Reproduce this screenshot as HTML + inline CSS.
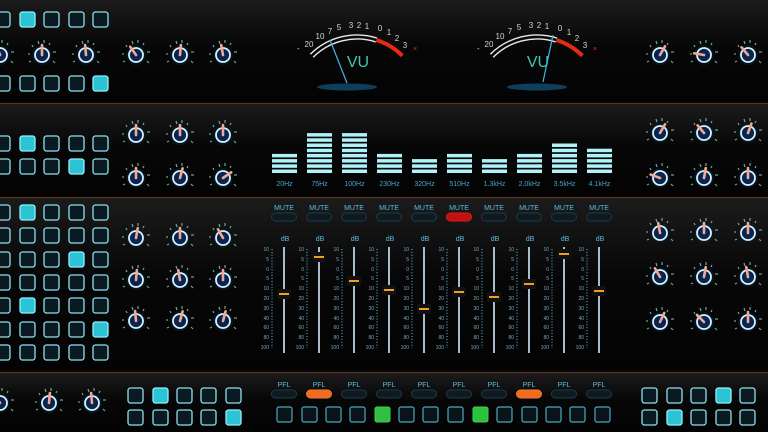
<!DOCTYPE html>
<html><head><meta charset="utf-8"><style>
html,body{margin:0;padding:0;background:#000;width:768px;height:432px;overflow:hidden}
svg{display:block}
text{font-family:"Liberation Sans",sans-serif}
.b{width:15px;height:15px;rx:2.5px;fill:#0a1a20;stroke:#8fe0ee;stroke-width:1.3}
.a{width:15px;height:15px;rx:2.5px;fill:#2cc4d4;stroke:#8ff0ff;stroke-width:1.3}
.sq{width:15px;height:15px;rx:2px;fill:#0a1418;stroke:#4aa8c0;stroke-width:1.2}
.g{width:15px;height:15px;rx:2px;fill:#30c040;stroke:#40d050;stroke-width:1}
.st{fill:#b0f2fa}
.hz{font-size:7px;fill:#4aa4c8;text-anchor:middle}
.lb{font-size:7px;fill:#5cbce0;text-anchor:middle}
.sc{font-size:5px;fill:#7aa8c0;text-anchor:end}
.pl{width:25px;height:8px;rx:4px;fill:#0d1a22;stroke:#1e3a48;stroke-width:1}
.vt{font-size:8px;fill:#c8d8d8;text-anchor:middle}
</style></head><body>
<svg width="768" height="432" viewBox="0 0 768 432" xmlns="http://www.w3.org/2000/svg">
<defs>
<linearGradient id="pg" x1="0" y1="0" x2="0" y2="1"><stop offset="0" stop-color="#1b1b1c"/><stop offset=".45" stop-color="#070707"/><stop offset="1" stop-color="#030303"/></linearGradient>
<g id="k">
<circle r="10" fill="#0a1a26" opacity=".7"/>
<circle r="7" fill="#0a2450" stroke="#d6f2ff" stroke-width="1.8"/>
<g stroke="#6aa898" stroke-width="1.2">
<line x1="-11" y1="6" x2="-13" y2="7"/><line x1="-12" y1="-1" x2="-14" y2="-1"/><line x1="-9" y1="-8" x2="-10" y2="-10"/><line x1="-3" y1="-11" x2="-4" y2="-14"/><line x1="2" y1="-12" x2="2" y2="-15"/><line x1="7" y1="-10" x2="8" y2="-12"/><line x1="11" y1="-3" x2="14" y2="-3"/><line x1="11" y1="6" x2="13" y2="8"/>
</g>
</g>
<line id="p" x1="0" y1="0" x2="0" y2="-10" stroke="#f4a890" stroke-width="2.6" stroke-linecap="round"/>
</defs>

<rect x="0" y="0" width="768" height="103" fill="url(#pg)"/>
<rect x="0" y="104" width="768" height="93" fill="url(#pg)"/>
<rect x="0" y="198" width="768" height="174" fill="url(#pg)"/>
<rect x="0" y="373" width="768" height="59" fill="url(#pg)"/>
<g stroke="#5a3220" stroke-width="1.2"><line x1="0" y1="103.5" x2="768" y2="103.5"/><line x1="0" y1="197.5" x2="768" y2="197.5"/><line x1="0" y1="372.5" x2="768" y2="372.5"/></g>

<g>
<rect class="b" x="-5" y="12"/><rect class="a" x="20" y="12"/><rect class="b" x="44" y="12"/><rect class="b" x="69" y="12"/><rect class="b" x="93" y="12"/>
<rect class="b" x="-5" y="76"/><rect class="b" x="20" y="76"/><rect class="b" x="44" y="76"/><rect class="b" x="69" y="76"/><rect class="a" x="93" y="76"/>
<rect class="b" x="-5" y="136"/><rect class="a" x="20" y="136"/><rect class="b" x="44" y="136"/><rect class="b" x="69" y="136"/><rect class="b" x="93" y="136"/>
<rect class="b" x="-5" y="159"/><rect class="b" x="20" y="159"/><rect class="b" x="44" y="159"/><rect class="a" x="69" y="159"/><rect class="b" x="93" y="159"/>
<rect class="b" x="-5" y="205"/><rect class="a" x="20" y="205"/><rect class="b" x="44" y="205"/><rect class="b" x="69" y="205"/><rect class="b" x="93" y="205"/>
<rect class="b" x="-5" y="228"/><rect class="b" x="20" y="228"/><rect class="b" x="44" y="228"/><rect class="b" x="69" y="228"/><rect class="b" x="93" y="228"/>
<rect class="b" x="-5" y="252"/><rect class="b" x="20" y="252"/><rect class="b" x="44" y="252"/><rect class="a" x="69" y="252"/><rect class="b" x="93" y="252"/>
<rect class="b" x="-5" y="275"/><rect class="b" x="20" y="275"/><rect class="b" x="44" y="275"/><rect class="b" x="69" y="275"/><rect class="b" x="93" y="275"/>
<rect class="b" x="-5" y="298"/><rect class="a" x="20" y="298"/><rect class="b" x="44" y="298"/><rect class="b" x="69" y="298"/><rect class="b" x="93" y="298"/>
<rect class="b" x="-5" y="322"/><rect class="b" x="20" y="322"/><rect class="b" x="44" y="322"/><rect class="b" x="69" y="322"/><rect class="a" x="93" y="322"/>
<rect class="b" x="-5" y="345"/><rect class="b" x="20" y="345"/><rect class="b" x="44" y="345"/><rect class="b" x="69" y="345"/><rect class="b" x="93" y="345"/>
<rect class="b" x="128" y="388"/><rect class="a" x="153" y="388"/><rect class="b" x="177" y="388"/><rect class="b" x="201" y="388"/><rect class="b" x="226" y="388"/>
<rect class="b" x="128" y="410"/><rect class="b" x="153" y="410"/><rect class="b" x="177" y="410"/><rect class="b" x="201" y="410"/><rect class="a" x="226" y="410"/>
<rect class="b" x="642" y="388"/><rect class="b" x="667" y="388"/><rect class="b" x="691" y="388"/><rect class="a" x="716" y="388"/><rect class="b" x="740" y="388"/>
<rect class="b" x="642" y="410"/><rect class="a" x="667" y="410"/><rect class="b" x="691" y="410"/><rect class="b" x="716" y="410"/><rect class="b" x="740" y="410"/>
</g>

<g>
<g transform="translate(0,55)"><use href="#k"/><use href="#p" transform="rotate(-20)"/></g>
<g transform="translate(42,55)"><use href="#k"/><use href="#p" transform="rotate(0)"/></g>
<g transform="translate(86,55)"><use href="#k"/><use href="#p" transform="rotate(-5)"/></g>
<g transform="translate(136,55)"><use href="#k"/><use href="#p" transform="rotate(-35)"/></g>
<g transform="translate(180,55)"><use href="#k"/><use href="#p" transform="rotate(5)"/></g>
<g transform="translate(223,55)"><use href="#k"/><use href="#p" transform="rotate(-10)"/></g>
<g transform="translate(660,55)"><use href="#k"/><use href="#p" transform="rotate(30)"/></g>
<g transform="translate(704,55)"><use href="#k"/><use href="#p" transform="rotate(-80)"/></g>
<g transform="translate(748,55)"><use href="#k"/><use href="#p" transform="rotate(-40)"/></g>
<g transform="translate(136,135)"><use href="#k"/><use href="#p" transform="rotate(0)"/></g>
<g transform="translate(180,135)"><use href="#k"/><use href="#p" transform="rotate(0)"/></g>
<g transform="translate(223,135)"><use href="#k"/><use href="#p" transform="rotate(0)"/></g>
<g transform="translate(136,178)"><use href="#k"/><use href="#p" transform="rotate(0)"/></g>
<g transform="translate(180,178)"><use href="#k"/><use href="#p" transform="rotate(15)"/></g>
<g transform="translate(223,178)"><use href="#k"/><use href="#p" transform="rotate(55)"/></g>
<g transform="translate(660,133)"><use href="#k"/><use href="#p" transform="rotate(30)"/></g>
<g transform="translate(704,133)"><use href="#k"/><use href="#p" transform="rotate(-40)"/></g>
<g transform="translate(748,133)"><use href="#k"/><use href="#p" transform="rotate(20)"/></g>
<g transform="translate(660,178)"><use href="#k"/><use href="#p" transform="rotate(-70)"/></g>
<g transform="translate(704,178)"><use href="#k"/><use href="#p" transform="rotate(10)"/></g>
<g transform="translate(748,178)"><use href="#k"/><use href="#p" transform="rotate(0)"/></g>
<g transform="translate(136,238)"><use href="#k"/><use href="#p" transform="rotate(10)"/></g>
<g transform="translate(180,238)"><use href="#k"/><use href="#p" transform="rotate(0)"/></g>
<g transform="translate(223,238)"><use href="#k"/><use href="#p" transform="rotate(-30)"/></g>
<g transform="translate(136,280)"><use href="#k"/><use href="#p" transform="rotate(5)"/></g>
<g transform="translate(180,280)"><use href="#k"/><use href="#p" transform="rotate(-10)"/></g>
<g transform="translate(223,280)"><use href="#k"/><use href="#p" transform="rotate(0)"/></g>
<g transform="translate(136,321)"><use href="#k"/><use href="#p" transform="rotate(-5)"/></g>
<g transform="translate(180,321)"><use href="#k"/><use href="#p" transform="rotate(15)"/></g>
<g transform="translate(223,321)"><use href="#k"/><use href="#p" transform="rotate(15)"/></g>
<g transform="translate(660,233)"><use href="#k"/><use href="#p" transform="rotate(-10)"/></g>
<g transform="translate(704,233)"><use href="#k"/><use href="#p" transform="rotate(0)"/></g>
<g transform="translate(748,233)"><use href="#k"/><use href="#p" transform="rotate(0)"/></g>
<g transform="translate(660,277)"><use href="#k"/><use href="#p" transform="rotate(-30)"/></g>
<g transform="translate(704,277)"><use href="#k"/><use href="#p" transform="rotate(10)"/></g>
<g transform="translate(748,277)"><use href="#k"/><use href="#p" transform="rotate(-10)"/></g>
<g transform="translate(660,322)"><use href="#k"/><use href="#p" transform="rotate(25)"/></g>
<g transform="translate(704,322)"><use href="#k"/><use href="#p" transform="rotate(-45)"/></g>
<g transform="translate(748,322)"><use href="#k"/><use href="#p" transform="rotate(0)"/></g>
<g transform="translate(0,403)"><use href="#k"/><use href="#p" transform="rotate(-30)"/></g>
<g transform="translate(49,403)"><use href="#k"/><use href="#p" transform="rotate(5)"/></g>
<g transform="translate(92,403)"><use href="#k"/><use href="#p" transform="rotate(-5)"/></g>
</g>

<g>
<ellipse cx="347" cy="87" rx="30" ry="3.5" fill="#0e3e5c"/>
<rect x="333" y="84" width="28" height="4" rx="2" fill="#0e3e5c"/>
<path d="M310.3 54.3 A66 66 0 0 1 377 38.1" fill="none" stroke="#e8e8e8" stroke-width="1.4"/>
<path d="M313.2 57.2 A62 62 0 0 1 375.7 41.9" fill="none" stroke="#e8e8e8" stroke-width="1.4"/>
<path d="M376.4 40 A64 64 0 0 1 402.3 55.7" fill="none" stroke="#e82a10" stroke-width="4"/>
<text x="358" y="67" font-size="16" fill="#3ec8b0" text-anchor="middle">VU</text>
<line x1="347" y1="83" x2="330" y2="40" stroke="#40b8e0" stroke-width="1.2"/>
<text class="vt" x="309" y="47">20</text><text class="vt" x="320" y="39">10</text><text class="vt" x="330" y="34">7</text><text class="vt" x="339" y="30">5</text><text class="vt" x="351" y="28">3</text><text class="vt" x="359" y="28">2</text><text class="vt" x="367" y="29">1</text><text class="vt" x="380" y="31">0</text><text class="vt" x="389" y="35">1</text><text class="vt" x="397" y="41">2</text><text class="vt" x="405" y="48">3</text>
<text x="413" y="51" font-size="7" fill="#e03020">×</text><text x="297" y="51" font-size="8" fill="#ddd">-</text>
</g>
<g>
<ellipse cx="537" cy="87" rx="30" ry="3.5" fill="#0e3e5c"/>
<rect x="523" y="84" width="28" height="4" rx="2" fill="#0e3e5c"/>
<path d="M490.3 54.3 A66 66 0 0 1 557 38.1" fill="none" stroke="#e8e8e8" stroke-width="1.4"/>
<path d="M493.2 57.2 A62 62 0 0 1 555.7 41.9" fill="none" stroke="#e8e8e8" stroke-width="1.4"/>
<path d="M556.4 40 A64 64 0 0 1 582.3 55.7" fill="none" stroke="#e82a10" stroke-width="4"/>
<text x="538" y="67" font-size="16" fill="#3ec8b0" text-anchor="middle">VU</text>
<line x1="543" y1="82" x2="553" y2="35" stroke="#40b8e0" stroke-width="1.2"/>
<text class="vt" x="489" y="47">20</text><text class="vt" x="500" y="39">10</text><text class="vt" x="510" y="34">7</text><text class="vt" x="519" y="30">5</text><text class="vt" x="531" y="28">3</text><text class="vt" x="539" y="28">2</text><text class="vt" x="547" y="29">1</text><text class="vt" x="560" y="31">0</text><text class="vt" x="569" y="35">1</text><text class="vt" x="577" y="41">2</text><text class="vt" x="585" y="48">3</text>
<text x="593" y="51" font-size="7" fill="#e03020">×</text><text x="477" y="51" font-size="8" fill="#ddd">-</text>
</g>

<g class="st">
<rect x="272" y="169.5" width="25" height="3.5"/><rect x="272" y="164.3" width="25" height="3.5"/><rect x="272" y="159.1" width="25" height="3.5"/><rect x="272" y="153.9" width="25" height="3.5"/>
<rect x="307" y="169.5" width="25" height="3.5"/><rect x="307" y="164.3" width="25" height="3.5"/><rect x="307" y="159.1" width="25" height="3.5"/><rect x="307" y="153.9" width="25" height="3.5"/><rect x="307" y="148.7" width="25" height="3.5"/><rect x="307" y="143.5" width="25" height="3.5"/><rect x="307" y="138.3" width="25" height="3.5"/><rect x="307" y="133.1" width="25" height="3.5"/>
<rect x="342" y="169.5" width="25" height="3.5"/><rect x="342" y="164.3" width="25" height="3.5"/><rect x="342" y="159.1" width="25" height="3.5"/><rect x="342" y="153.9" width="25" height="3.5"/><rect x="342" y="148.7" width="25" height="3.5"/><rect x="342" y="143.5" width="25" height="3.5"/><rect x="342" y="138.3" width="25" height="3.5"/><rect x="342" y="133.1" width="25" height="3.5"/>
<rect x="377" y="169.5" width="25" height="3.5"/><rect x="377" y="164.3" width="25" height="3.5"/><rect x="377" y="159.1" width="25" height="3.5"/><rect x="377" y="153.9" width="25" height="3.5"/>
<rect x="412" y="169.5" width="25" height="3.5"/><rect x="412" y="164.3" width="25" height="3.5"/><rect x="412" y="159.1" width="25" height="3.5"/>
<rect x="447" y="169.5" width="25" height="3.5"/><rect x="447" y="164.3" width="25" height="3.5"/><rect x="447" y="159.1" width="25" height="3.5"/><rect x="447" y="153.9" width="25" height="3.5"/>
<rect x="482" y="169.5" width="25" height="3.5"/><rect x="482" y="164.3" width="25" height="3.5"/><rect x="482" y="159.1" width="25" height="3.5"/>
<rect x="517" y="169.5" width="25" height="3.5"/><rect x="517" y="164.3" width="25" height="3.5"/><rect x="517" y="159.1" width="25" height="3.5"/><rect x="517" y="153.9" width="25" height="3.5"/>
<rect x="552" y="169.5" width="25" height="3.5"/><rect x="552" y="164.3" width="25" height="3.5"/><rect x="552" y="159.1" width="25" height="3.5"/><rect x="552" y="153.9" width="25" height="3.5"/><rect x="552" y="148.7" width="25" height="3.5"/><rect x="552" y="143.5" width="25" height="3.5"/>
<rect x="587" y="169.5" width="25" height="3.5"/><rect x="587" y="164.3" width="25" height="3.5"/><rect x="587" y="159.1" width="25" height="3.5"/><rect x="587" y="153.9" width="25" height="3.5"/><rect x="587" y="148.7" width="25" height="3.5"/>
</g>
<text class="hz" x="284.5" y="186">20Hz</text><text class="hz" x="319.5" y="186">75Hz</text><text class="hz" x="354.5" y="186">100Hz</text><text class="hz" x="389.5" y="186">230Hz</text><text class="hz" x="424.5" y="186">320Hz</text><text class="hz" x="459.5" y="186">510Hz</text><text class="hz" x="494.5" y="186">1.3kHz</text><text class="hz" x="529.5" y="186">2.0kHz</text><text class="hz" x="564.5" y="186">3.5kHz</text><text class="hz" x="599.5" y="186">4.1kHz</text>

<text class="lb" x="284" y="210">MUTE</text><text class="lb" x="319" y="210">MUTE</text><text class="lb" x="354" y="210">MUTE</text><text class="lb" x="389" y="210">MUTE</text><text class="lb" x="424" y="210">MUTE</text><text class="lb" x="459" y="210">MUTE</text><text class="lb" x="494" y="210">MUTE</text><text class="lb" x="529" y="210">MUTE</text><text class="lb" x="564" y="210">MUTE</text><text class="lb" x="599" y="210">MUTE</text>
<rect class="pl" x="271.5" y="213"/><rect class="pl" x="306.5" y="213"/><rect class="pl" x="341.5" y="213"/><rect class="pl" x="376.5" y="213"/><rect class="pl" x="411.5" y="213"/><rect class="pl" x="446.5" y="213" style="fill:#c41010;stroke:#d02010"/><rect class="pl" x="481.5" y="213"/><rect class="pl" x="516.5" y="213"/><rect class="pl" x="551.5" y="213"/><rect class="pl" x="586.5" y="213"/>

<g transform="translate(284,0)">
<text class="lb" x="1" y="241">dB</text>
<line x1="-12" y1="249" x2="-12" y2="348" stroke="#3a8aa0" stroke-width="1.5" stroke-dasharray="1 1.9"/>
<line x1="0" y1="247" x2="0" y2="353" stroke="#a8bccc" stroke-width="2"/>
<text class="sc"><tspan x="-15" y="251">10</tspan><tspan x="-15" y="261">5</tspan><tspan x="-15" y="271">0</tspan><tspan x="-15" y="280">5</tspan><tspan x="-15" y="290">10</tspan><tspan x="-15" y="300">20</tspan><tspan x="-15" y="310">30</tspan><tspan x="-15" y="320">40</tspan><tspan x="-15" y="329">60</tspan><tspan x="-15" y="339">80</tspan><tspan x="-15" y="349">100</tspan></text>
<rect x="-7" y="289" width="14" height="10" rx="2" fill="#111"/><line x1="-5" y1="294" x2="5" y2="294" stroke="#f0a020" stroke-width="2"/>
</g>
<g transform="translate(319,0)">
<text class="lb" x="1" y="241">dB</text>
<line x1="-12" y1="249" x2="-12" y2="348" stroke="#3a8aa0" stroke-width="1.5" stroke-dasharray="1 1.9"/>
<line x1="0" y1="247" x2="0" y2="353" stroke="#a8bccc" stroke-width="2"/>
<text class="sc"><tspan x="-15" y="251">10</tspan><tspan x="-15" y="261">5</tspan><tspan x="-15" y="271">0</tspan><tspan x="-15" y="280">5</tspan><tspan x="-15" y="290">10</tspan><tspan x="-15" y="300">20</tspan><tspan x="-15" y="310">30</tspan><tspan x="-15" y="320">40</tspan><tspan x="-15" y="329">60</tspan><tspan x="-15" y="339">80</tspan><tspan x="-15" y="349">100</tspan></text>
<rect x="-7" y="252" width="14" height="10" rx="2" fill="#111"/><line x1="-5" y1="257" x2="5" y2="257" stroke="#f0a020" stroke-width="2"/>
</g>
<g transform="translate(354,0)">
<text class="lb" x="1" y="241">dB</text>
<line x1="-12" y1="249" x2="-12" y2="348" stroke="#3a8aa0" stroke-width="1.5" stroke-dasharray="1 1.9"/>
<line x1="0" y1="247" x2="0" y2="353" stroke="#a8bccc" stroke-width="2"/>
<text class="sc"><tspan x="-15" y="251">10</tspan><tspan x="-15" y="261">5</tspan><tspan x="-15" y="271">0</tspan><tspan x="-15" y="280">5</tspan><tspan x="-15" y="290">10</tspan><tspan x="-15" y="300">20</tspan><tspan x="-15" y="310">30</tspan><tspan x="-15" y="320">40</tspan><tspan x="-15" y="329">60</tspan><tspan x="-15" y="339">80</tspan><tspan x="-15" y="349">100</tspan></text>
<rect x="-7" y="276" width="14" height="10" rx="2" fill="#111"/><line x1="-5" y1="281" x2="5" y2="281" stroke="#f0a020" stroke-width="2"/>
</g>
<g transform="translate(389,0)">
<text class="lb" x="1" y="241">dB</text>
<line x1="-12" y1="249" x2="-12" y2="348" stroke="#3a8aa0" stroke-width="1.5" stroke-dasharray="1 1.9"/>
<line x1="0" y1="247" x2="0" y2="353" stroke="#a8bccc" stroke-width="2"/>
<text class="sc"><tspan x="-15" y="251">10</tspan><tspan x="-15" y="261">5</tspan><tspan x="-15" y="271">0</tspan><tspan x="-15" y="280">5</tspan><tspan x="-15" y="290">10</tspan><tspan x="-15" y="300">20</tspan><tspan x="-15" y="310">30</tspan><tspan x="-15" y="320">40</tspan><tspan x="-15" y="329">60</tspan><tspan x="-15" y="339">80</tspan><tspan x="-15" y="349">100</tspan></text>
<rect x="-7" y="285" width="14" height="10" rx="2" fill="#111"/><line x1="-5" y1="290" x2="5" y2="290" stroke="#f0a020" stroke-width="2"/>
</g>
<g transform="translate(424,0)">
<text class="lb" x="1" y="241">dB</text>
<line x1="-12" y1="249" x2="-12" y2="348" stroke="#3a8aa0" stroke-width="1.5" stroke-dasharray="1 1.9"/>
<line x1="0" y1="247" x2="0" y2="353" stroke="#a8bccc" stroke-width="2"/>
<text class="sc"><tspan x="-15" y="251">10</tspan><tspan x="-15" y="261">5</tspan><tspan x="-15" y="271">0</tspan><tspan x="-15" y="280">5</tspan><tspan x="-15" y="290">10</tspan><tspan x="-15" y="300">20</tspan><tspan x="-15" y="310">30</tspan><tspan x="-15" y="320">40</tspan><tspan x="-15" y="329">60</tspan><tspan x="-15" y="339">80</tspan><tspan x="-15" y="349">100</tspan></text>
<rect x="-7" y="304" width="14" height="10" rx="2" fill="#111"/><line x1="-5" y1="309" x2="5" y2="309" stroke="#f0a020" stroke-width="2"/>
</g>
<g transform="translate(459,0)">
<text class="lb" x="1" y="241">dB</text>
<line x1="-12" y1="249" x2="-12" y2="348" stroke="#3a8aa0" stroke-width="1.5" stroke-dasharray="1 1.9"/>
<line x1="0" y1="247" x2="0" y2="353" stroke="#a8bccc" stroke-width="2"/>
<text class="sc"><tspan x="-15" y="251">10</tspan><tspan x="-15" y="261">5</tspan><tspan x="-15" y="271">0</tspan><tspan x="-15" y="280">5</tspan><tspan x="-15" y="290">10</tspan><tspan x="-15" y="300">20</tspan><tspan x="-15" y="310">30</tspan><tspan x="-15" y="320">40</tspan><tspan x="-15" y="329">60</tspan><tspan x="-15" y="339">80</tspan><tspan x="-15" y="349">100</tspan></text>
<rect x="-7" y="287" width="14" height="10" rx="2" fill="#111"/><line x1="-5" y1="292" x2="5" y2="292" stroke="#f0a020" stroke-width="2"/>
</g>
<g transform="translate(494,0)">
<text class="lb" x="1" y="241">dB</text>
<line x1="-12" y1="249" x2="-12" y2="348" stroke="#3a8aa0" stroke-width="1.5" stroke-dasharray="1 1.9"/>
<line x1="0" y1="247" x2="0" y2="353" stroke="#a8bccc" stroke-width="2"/>
<text class="sc"><tspan x="-15" y="251">10</tspan><tspan x="-15" y="261">5</tspan><tspan x="-15" y="271">0</tspan><tspan x="-15" y="280">5</tspan><tspan x="-15" y="290">10</tspan><tspan x="-15" y="300">20</tspan><tspan x="-15" y="310">30</tspan><tspan x="-15" y="320">40</tspan><tspan x="-15" y="329">60</tspan><tspan x="-15" y="339">80</tspan><tspan x="-15" y="349">100</tspan></text>
<rect x="-7" y="292" width="14" height="10" rx="2" fill="#111"/><line x1="-5" y1="297" x2="5" y2="297" stroke="#f0a020" stroke-width="2"/>
</g>
<g transform="translate(529,0)">
<text class="lb" x="1" y="241">dB</text>
<line x1="-12" y1="249" x2="-12" y2="348" stroke="#3a8aa0" stroke-width="1.5" stroke-dasharray="1 1.9"/>
<line x1="0" y1="247" x2="0" y2="353" stroke="#a8bccc" stroke-width="2"/>
<text class="sc"><tspan x="-15" y="251">10</tspan><tspan x="-15" y="261">5</tspan><tspan x="-15" y="271">0</tspan><tspan x="-15" y="280">5</tspan><tspan x="-15" y="290">10</tspan><tspan x="-15" y="300">20</tspan><tspan x="-15" y="310">30</tspan><tspan x="-15" y="320">40</tspan><tspan x="-15" y="329">60</tspan><tspan x="-15" y="339">80</tspan><tspan x="-15" y="349">100</tspan></text>
<rect x="-7" y="279" width="14" height="10" rx="2" fill="#111"/><line x1="-5" y1="284" x2="5" y2="284" stroke="#f0a020" stroke-width="2"/>
</g>
<g transform="translate(564,0)">
<text class="lb" x="1" y="241">dB</text>
<line x1="-12" y1="249" x2="-12" y2="348" stroke="#3a8aa0" stroke-width="1.5" stroke-dasharray="1 1.9"/>
<line x1="0" y1="247" x2="0" y2="353" stroke="#a8bccc" stroke-width="2"/>
<text class="sc"><tspan x="-15" y="251">10</tspan><tspan x="-15" y="261">5</tspan><tspan x="-15" y="271">0</tspan><tspan x="-15" y="280">5</tspan><tspan x="-15" y="290">10</tspan><tspan x="-15" y="300">20</tspan><tspan x="-15" y="310">30</tspan><tspan x="-15" y="320">40</tspan><tspan x="-15" y="329">60</tspan><tspan x="-15" y="339">80</tspan><tspan x="-15" y="349">100</tspan></text>
<rect x="-7" y="249" width="14" height="10" rx="2" fill="#111"/><line x1="-5" y1="254" x2="5" y2="254" stroke="#f0a020" stroke-width="2"/>
</g>
<g transform="translate(599,0)">
<text class="lb" x="1" y="241">dB</text>
<line x1="-12" y1="249" x2="-12" y2="348" stroke="#3a8aa0" stroke-width="1.5" stroke-dasharray="1 1.9"/>
<line x1="0" y1="247" x2="0" y2="353" stroke="#a8bccc" stroke-width="2"/>
<text class="sc"><tspan x="-15" y="251">10</tspan><tspan x="-15" y="261">5</tspan><tspan x="-15" y="271">0</tspan><tspan x="-15" y="280">5</tspan><tspan x="-15" y="290">10</tspan><tspan x="-15" y="300">20</tspan><tspan x="-15" y="310">30</tspan><tspan x="-15" y="320">40</tspan><tspan x="-15" y="329">60</tspan><tspan x="-15" y="339">80</tspan><tspan x="-15" y="349">100</tspan></text>
<rect x="-7" y="286" width="14" height="10" rx="2" fill="#111"/><line x1="-5" y1="291" x2="5" y2="291" stroke="#f0a020" stroke-width="2"/>
</g>

<text class="lb" x="284" y="387">PFL</text><text class="lb" x="319" y="387">PFL</text><text class="lb" x="354" y="387">PFL</text><text class="lb" x="389" y="387">PFL</text><text class="lb" x="424" y="387">PFL</text><text class="lb" x="459" y="387">PFL</text><text class="lb" x="494" y="387">PFL</text><text class="lb" x="529" y="387">PFL</text><text class="lb" x="564" y="387">PFL</text><text class="lb" x="599" y="387">PFL</text>
<rect class="pl" x="271.5" y="390"/><rect class="pl" x="306.5" y="390" style="fill:#f06a20;stroke:#f07a30"/><rect class="pl" x="341.5" y="390"/><rect class="pl" x="376.5" y="390"/><rect class="pl" x="411.5" y="390"/><rect class="pl" x="446.5" y="390"/><rect class="pl" x="481.5" y="390"/><rect class="pl" x="516.5" y="390" style="fill:#f06a20;stroke:#f07a30"/><rect class="pl" x="551.5" y="390"/><rect class="pl" x="586.5" y="390"/>

<rect class="sq" x="277" y="407"/><rect class="sq" x="302" y="407"/><rect class="sq" x="326" y="407"/><rect class="sq" x="350" y="407"/><rect class="g" x="375" y="407"/><rect class="sq" x="399" y="407"/><rect class="sq" x="423" y="407"/><rect class="sq" x="448" y="407"/><rect class="g" x="473" y="407"/><rect class="sq" x="497" y="407"/><rect class="sq" x="522" y="407"/><rect class="sq" x="546" y="407"/><rect class="sq" x="570" y="407"/><rect class="sq" x="595" y="407"/>
</svg>
</body></html>
